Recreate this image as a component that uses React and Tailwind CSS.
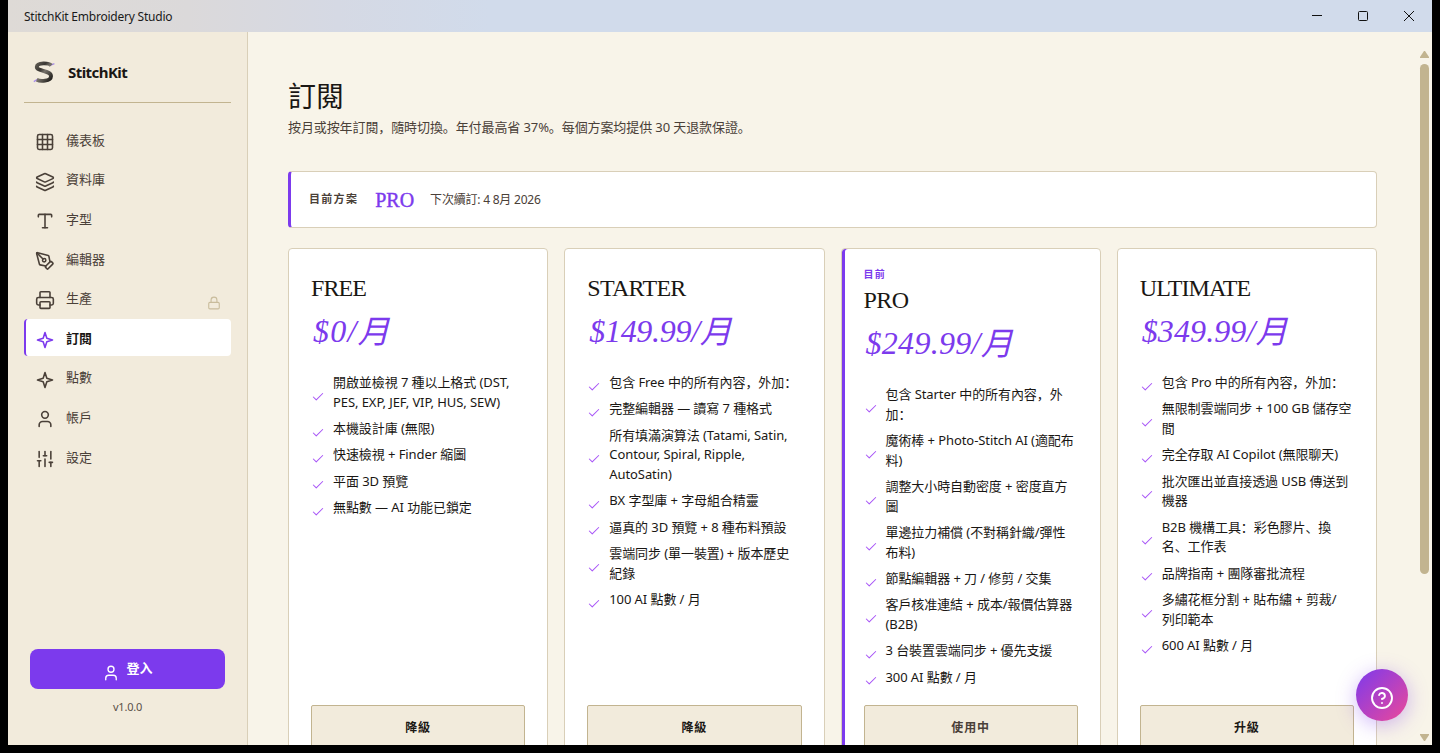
import React from "react";
import {
  Check,
  CircleQuestionMark,
  Grid3x3,
  Layers,
  Lock,
  PenTool,
  Printer,
  SlidersVertical,
  Type,
  User,
} from "lucide-react";

const Star = ({ className, size = 20, strokeWidth = 1.8 }) => (
  <svg
    className={className}
    width={size}
    height={size}
    viewBox="0 0 24 24"
    fill="none"
    stroke="currentColor"
    strokeWidth={strokeWidth}
    strokeLinecap="round"
    strokeLinejoin="round"
  >
    <path d="M12 3l2.2 6.8L21 12l-6.8 2.2L12 21l-2.2-6.8L3 12l6.8-2.2z" />
  </svg>
);

const navItems = [
  { label: "儀表板", icon: Grid3x3 },
  { label: "資料庫", icon: Layers },
  { label: "字型", icon: Type },
  { label: "編輯器", icon: PenTool },
  { label: "生產", icon: Printer, locked: true },
  { label: "訂閱", icon: Star, active: true },
  { label: "點數", icon: Star },
  { label: "帳戶", icon: User },
  { label: "設定", icon: SlidersVertical },
];

const plans = [
  {
    name: "FREE",
    nameClass: "tracking-[-0.9px]",
    price: "$0/",
    priceClass: "tracking-[1.2px]",
    features: [
      "開啟並檢視 7 種以上格式 (DST, PES, EXP, JEF, VIP, HUS, SEW)",
      "本機設計庫 (無限)",
      "快速檢視 + Finder 縮圖",
      "平面 3D 預覽",
      "無點數 — AI 功能已鎖定",
    ],
    action: "降級",
  },
  {
    name: "STARTER",
    nameClass: "tracking-[-0.7px]",
    price: "$149.99/",
    priceClass: "tracking-[-0.3px]",
    features: [
      "包含 Free 中的所有內容，外加：",
      "完整編輯器 — 讀寫 7 種格式",
      "所有填滿演算法 (Tatami, Satin, Contour, Spiral, Ripple,\nAutoSatin)",
      "BX 字型庫 + 字母組合精靈",
      "逼真的 3D 預覽 + 8 種布料預設",
      "雲端同步 (單一裝置) + 版本歷史紀錄",
      "100 AI 點數 / 月",
    ],
    action: "降級",
  },
  {
    name: "PRO",
    nameClass: "tracking-[-0.5px]",
    price: "$249.99/",
    priceClass: "tracking-[0.3px]",
    current: true,
    features: [
      "包含 Starter 中的所有內容，外加：",
      "魔術棒 + Photo-Stitch AI (適配布料)",
      "調整大小時自動密度 + 密度直方圖",
      "單邊拉力補償 (不對稱針織/彈性布料)",
      "節點編輯器 + 刀 / 修剪 / 交集",
      "客戶核准連結 + 成本/報價估算器 (B2B)",
      "3 台裝置雲端同步 + 優先支援",
      "300 AI 點數 / 月",
    ],
    action: "使用中",
  },
  {
    name: "ULTIMATE",
    nameClass: "tracking-[-0.9px]",
    price: "$349.99/",
    priceClass: "tracking-[0.1px]",
    features: [
      "包含 Pro 中的所有內容，外加：",
      "無限制雲端同步 + 100 GB 儲存空間",
      "完全存取 AI Copilot (無限聊天)",
      "批次匯出並直接透過 USB 傳送到機器",
      "B2B 機構工具：彩色膠片、換名、工作表",
      "品牌指南 + 團隊審批流程",
      "多繡花框分割 + 貼布繡 + 剪裁/\n列印範本",
      "600 AI 點數 / 月",
    ],
    action: "升級",
  },
];

const Logo = () => (
  <svg width="24" height="26" viewBox="0 0 24 26" fill="none">
    <defs>
      <linearGradient id="thread" x1="0" y1="0" x2="1" y2="1">
        <stop offset="0" stopColor="#5d5951" />
        <stop offset="0.3" stopColor="#3a3733" />
        <stop offset="0.5" stopColor="#77726a" />
        <stop offset="0.75" stopColor="#4a4741" />
        <stop offset="1" stopColor="#1d1b19" />
      </linearGradient>
    </defs>
    <path d="M18 6.5L22.4 4.6M1.8 22.6L6 20" stroke="#a78be8" strokeWidth="1.3" />
    <path
      d="M19.2 6.4C17 4 5.2 3 4.8 8C4.6 12.4 19.2 11.4 19 17.2C18.8 22.6 8 22.4 4.8 20.8"
      stroke="url(#thread)"
      strokeWidth="3.9"
    />
  </svg>
);

const TitleBar = () => (
  <div className="flex h-8 shrink-0 items-center justify-between bg-[linear-gradient(90deg,#dedad6_0px,#dbd9da_180px,#d5d9e4_330px,#d1dbeb_480px)] pl-4 pr-[17px]">
    <span className="pt-0.5 text-[12px] tracking-[-0.22px] text-[#1a1a1a]">
      StitchKit Embroidery Studio
    </span>
    <svg width="104" height="12" viewBox="0 0 104 12" fill="none" stroke="#111">
      <path d="M1 5.5H11" />
      <rect x="47.5" y="1.5" width="9" height="9" rx="1" />
      <path d="M93 1L103 11M103 1L93 11" />
    </svg>
  </div>
);

const Sidebar = () => (
  <aside className="flex w-60 shrink-0 flex-col border-r border-[#d9cfb8] bg-[#f2ebdc] px-4">
    <div className="flex h-[71px] items-center border-b border-[#c2b490] pl-2 pt-[10px]">
      <Logo />
      <span className="ml-3 text-[15px] font-bold tracking-[-0.55px] text-[#1a1714]">
        StitchKit
      </span>
    </div>
    <nav className="mt-[18px] flex flex-col gap-[2.6px]">
      {navItems.map(({ label, icon: Icon, active, locked }) => (
        <div
          key={label}
          className={`flex h-[37px] items-center rounded border-l-2 pl-[9px] pr-2.5 ${
            active
              ? "border-[#7c3aed] bg-white font-semibold text-[#1a1714]"
              : "border-transparent text-[#4a4038]"
          }`}
        >
          <Icon
            size={20}
            strokeWidth={1.9}
            className={`mt-[5px] ${active ? "text-[#7c3aed]" : ""}`}
          />
          <span className="ml-[11px] pt-0.5 text-[13px]">{label}</span>
          {locked && (
            <Lock
              size={14}
              strokeWidth={1.9}
              className="ml-auto mt-2.5 text-[#c9bc9c]"
            />
          )}
        </div>
      ))}
    </nav>
    <div className="mt-auto flex flex-col items-center pb-[30px]">
      <button className="flex h-10 w-[195px] items-center justify-center gap-1.5 rounded-lg bg-[#7c3aed] text-[13px] font-bold text-white">
        <User size={18} strokeWidth={1.8} className="mt-[7px]" />
        <span>登入</span>
      </button>
      <span className="mt-[9px] text-[11px] leading-[17px] tracking-[-0.2px] text-[#5a5048]">
        v1.0.0
      </span>
    </div>
  </aside>
);

const PlanCard = ({ plan }) => (
  <div
    className={`flex h-[525px] flex-col rounded border border-[#d9cfb8] bg-white px-[22px] pb-[22px] pt-[21px] ${
      plan.current ? "shadow-[inset_3px_0_0_#7c3aed]" : ""
    }`}
  >
    {plan.current && (
      <span className="h-3 text-[10px] font-bold leading-[8px] tracking-[1.2px] text-[#7c3aed]">
        目前
      </span>
    )}
    <h2
      className={`h-9 font-['Liberation_Serif',serif] text-[24px] leading-9 text-[#1a1714] ${plan.nameClass}`}
    >
      {plan.name}
    </h2>
    <div className="mt-[5px] flex h-10 items-center pl-0.5 text-[32px] italic leading-10 text-[#7c3aed]">
      <span
        className={`font-['Liberation_Serif',serif] ${plan.priceClass}`}
      >
        {plan.price}
      </span>
      <span>月</span>
    </div>
    <ul className="mt-[22px] flex flex-col gap-[6.6px]">
      {plan.features.map((feature) => (
        <li key={feature} className="flex items-center gap-2">
          <Check
            size={14}
            strokeWidth={1.8}
            className="-mb-1 mt-1 shrink-0 text-[#a855f7]"
          />
          <span className="whitespace-pre-line text-[13px] leading-[19.7px] tracking-[-0.08px] text-[#1a1714]">
            {feature}
          </span>
        </li>
      ))}
    </ul>
    <button
      className={`mt-auto h-[45px] shrink-0 rounded-xs border border-[#c2b490] bg-[#f2ebdc] text-[12px] font-bold tracking-[0.9px] ${
        plan.current ? "text-[#4a4038]" : "text-[#1a1714]"
      }`}
    >
      {plan.action}
    </button>
  </div>
);

const Scrollbar = () => (
  <div className="flex w-[15px] shrink-0 flex-col items-center pb-1 pt-[19px]">
    <svg width="9" height="7" viewBox="0 0 9 7" fill="#c2b490">
      <path d="M4 0h1l4 6v1H0V6z" />
    </svg>
    <div className="mt-1.5 h-[510px] w-[9px] rounded-full bg-[#c2b490]" />
    <svg className="mt-auto" width="9" height="7" viewBox="0 0 9 7" fill="#c2b490">
      <path d="M4 7h1l4-6V0H0v1z" />
    </svg>
  </div>
);

const App = () => {
  return (
    <div
      lang="zh-Hans"
      className="h-[753px] w-[1440px] overflow-hidden bg-black px-2 pb-2 font-['Noto_Sans','Noto_Sans_CJK_SC',sans-serif]"
    >
      <div className="relative flex h-full flex-col overflow-hidden bg-[#f8f4e9]">
        <TitleBar />
        <div className="flex min-h-0 flex-1">
          <Sidebar />
          <main className="min-w-0 flex-1 overflow-hidden px-10 pt-[44px]">
            <h1 className="h-10 text-[28px] leading-10 text-[#1a1714]">訂閱</h1>
            <p className="text-[13px] leading-[22px] tracking-[-0.1px] text-[#4a4038]">
              按月或按年訂閱，隨時切換。年付最高省 37%。每個方案均提供 30
              天退款保證。
            </p>
            <div className="mt-[33px] flex h-[57px] items-center rounded border border-l-3 border-[#d9cfb8] border-l-[#7c3aed] bg-white pl-[18px]">
              <span className="text-[11px] font-bold tracking-[1.3px] text-[#4a4038]">
                目前方案
              </span>
              <span className="ml-[17px] font-['Liberation_Serif',serif] text-[20px] text-[#7c3aed] [-webkit-text-stroke:0.4px_#7c3aed]">
                PRO
              </span>
              <span className="ml-4 text-[12px] tracking-[-0.22px] text-[#4a4038]">
                下次續訂: 4 8月 2026
              </span>
            </div>
            <div className="mt-5 grid grid-cols-4 gap-4">
              {plans.map((plan) => (
                <PlanCard key={plan.name} plan={plan} />
              ))}
            </div>
          </main>
          <Scrollbar />
        </div>
        <button className="absolute bottom-6 right-6 flex h-[52px] w-[52px] items-center justify-center rounded-full bg-[linear-gradient(135deg,#7c3aed,#ec4899)] text-white shadow-[0_4px_20px_rgba(124,58,237,0.35)]">
          <CircleQuestionMark size={24} strokeWidth={1.9} className="mt-1.5" />
        </button>
      </div>
    </div>
  );
};

export default App;
